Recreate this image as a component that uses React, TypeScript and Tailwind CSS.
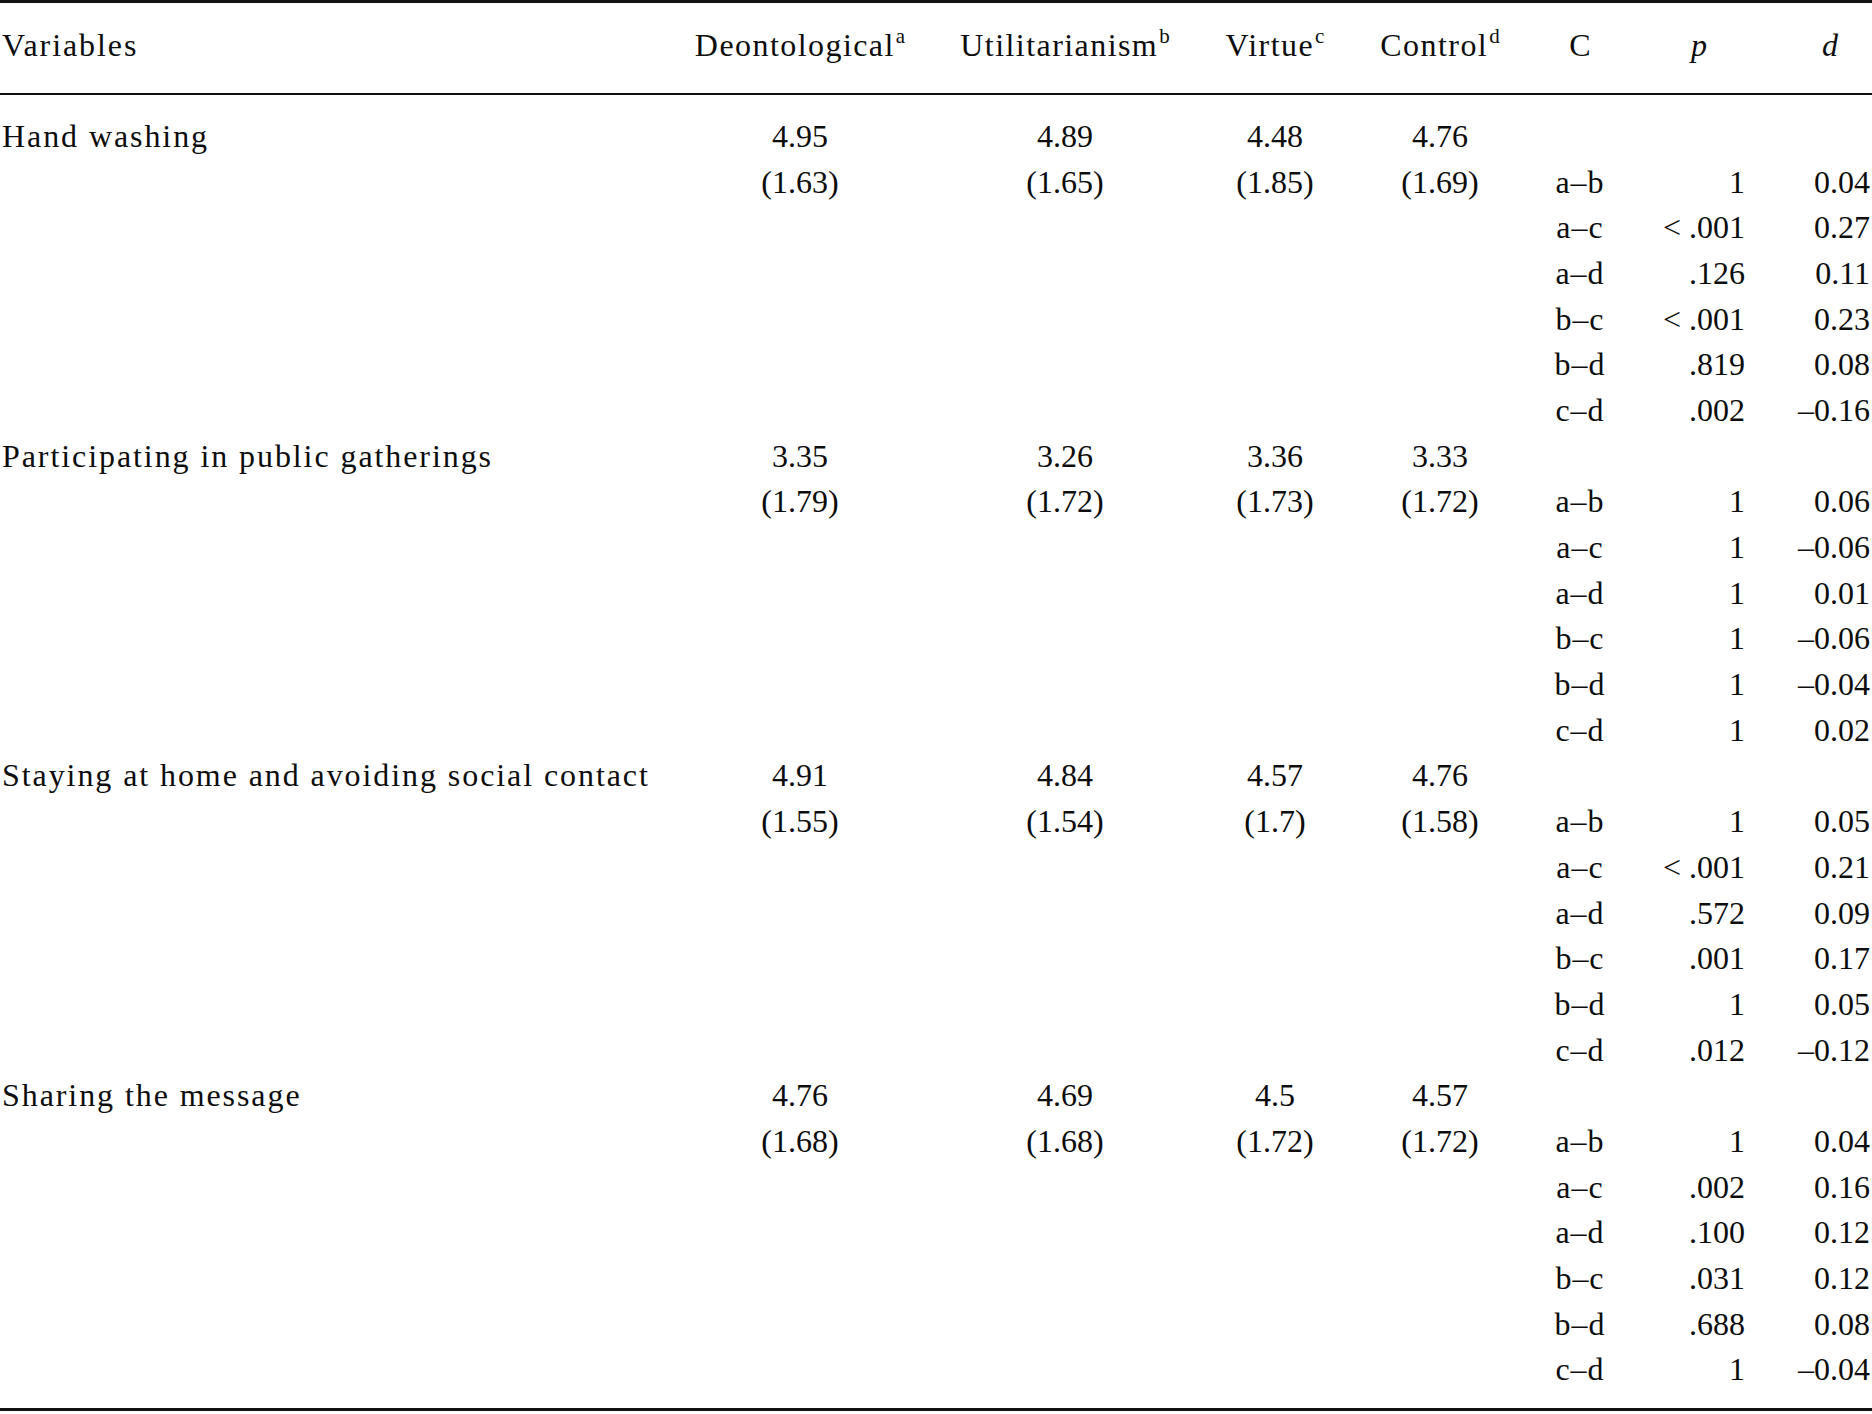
import React from "react";

type Group = {
  label: string;
  means: string[];
  sds: string[];
  comps: [string, string, string][];
};

const groups: Group[] = [
  {
    label: "Hand washing",
    means: ["4.95", "4.89", "4.48", "4.76"],
    sds: ["(1.63)", "(1.65)", "(1.85)", "(1.69)"],
    comps: [
      ["a–b", "1", "0.04"],
      ["a–c", "< .001", "0.27"],
      ["a–d", ".126", "0.11"],
      ["b–c", "< .001", "0.23"],
      ["b–d", ".819", "0.08"],
      ["c–d", ".002", "–0.16"],
    ],
  },
  {
    label: "Participating in public gatherings",
    means: ["3.35", "3.26", "3.36", "3.33"],
    sds: ["(1.79)", "(1.72)", "(1.73)", "(1.72)"],
    comps: [
      ["a–b", "1", "0.06"],
      ["a–c", "1", "–0.06"],
      ["a–d", "1", "0.01"],
      ["b–c", "1", "–0.06"],
      ["b–d", "1", "–0.04"],
      ["c–d", "1", "0.02"],
    ],
  },
  {
    label: "Staying at home and avoiding social contact",
    means: ["4.91", "4.84", "4.57", "4.76"],
    sds: ["(1.55)", "(1.54)", "(1.7)", "(1.58)"],
    comps: [
      ["a–b", "1", "0.05"],
      ["a–c", "< .001", "0.21"],
      ["a–d", ".572", "0.09"],
      ["b–c", ".001", "0.17"],
      ["b–d", "1", "0.05"],
      ["c–d", ".012", "–0.12"],
    ],
  },
  {
    label: "Sharing the message",
    means: ["4.76", "4.69", "4.5", "4.57"],
    sds: ["(1.68)", "(1.68)", "(1.72)", "(1.72)"],
    comps: [
      ["a–b", "1", "0.04"],
      ["a–c", ".002", "0.16"],
      ["a–d", ".100", "0.12"],
      ["b–c", ".031", "0.12"],
      ["b–d", ".688", "0.08"],
      ["c–d", "1", "–0.04"],
    ],
  },
];

const cols =
  "grid grid-cols-[670px_260px_270px_150px_180px_100px_115px_125px] items-center";

const Row = ({ cells }: { cells: string[] }) => (
  <div className={`${cols} h-[45.7px]`}>
    <div className="pl-[2px] tracking-[0.06em] whitespace-nowrap">{cells[0]}</div>
    <div className="text-center">{cells[1]}</div>
    <div className="text-center">{cells[2]}</div>
    <div className="text-center">{cells[3]}</div>
    <div className="text-center">{cells[4]}</div>
    <div className="text-center tracking-[0.03em]">{cells[5]}</div>
    <div className="text-right">{cells[6]}</div>
    <div className="text-right">{cells[7]}</div>
  </div>
);

const Head = ({ name, sup }: { name: string; sup: string }) => (
  <div className="text-center tracking-[0.045em] whitespace-nowrap">
    {name}
    <sup className="text-[21px] top-[-0.62em] ml-[1px] tracking-normal">{sup}</sup>
  </div>
);

export default function App() {
  return (
    <div className="w-[1872px] h-[1414px] bg-white text-[#0d0d0d] font-['Liberation_Serif',serif] text-[32px] leading-none">
      <div className="h-[3px] bg-[#111]" />
      <div className={`${cols} h-[90px] pb-[6px]`}>
        <div className="pl-[2px] tracking-[0.06em]">Variables</div>
        <Head name="Deontological" sup="a" />
        <Head name="Utilitarianism" sup="b" />
        <Head name="Virtue" sup="c" />
        <Head name="Control" sup="d" />
        <div className="text-center">C</div>
        <div className="text-right pr-[38px] italic">p</div>
        <div className="text-right pr-[32px] italic">d</div>
      </div>
      <div className="h-[2px] bg-[#111]" />
      <div className="pt-[18px] pb-[16px]">
        {groups.map((g) => (
          <React.Fragment key={g.label}>
            <Row cells={[g.label, ...g.means, "", "", ""]} />
            {g.comps.map((c, i) => (
              <Row
                key={c[0]}
                cells={[
                  "",
                  ...(i === 0 ? g.sds : ["", "", "", ""]),
                  c[0],
                  c[1],
                  c[2],
                ]}
              />
            ))}
          </React.Fragment>
        ))}
      </div>
      <div className="h-[3px] bg-[#111]" />
    </div>
  );
}
